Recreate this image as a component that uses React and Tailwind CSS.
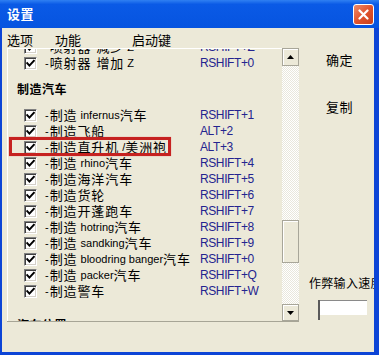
import React from "react";

const CJK = { fontFamily: '"Noto Sans CJK SC", "Liberation Sans", sans-serif' };
const LAT = { fontFamily: '"Liberation Sans", "Noto Sans CJK SC", sans-serif' };

function Mixed({ text }) {
  const parts = text.split(/([\x00-\x7F]+)/).filter((p) => p.length);
  return parts.map((p, i) => {
    if (p === " ") return <span key={i} className="inline-block w-[5px]" />;
    if (/^[\x00-\x7F]+$/.test(p)) {
      return (
        <span key={i} className="whitespace-pre text-[11px] tracking-normal" style={LAT}>
          {p}
        </span>
      );
    }
    return (
      <span key={i} className="text-[13px] tracking-[0.9px]" style={CJK}>
        {p}
      </span>
    );
  });
}

function Checkbox() {
  return (
    <div className="flex h-[13px] w-[13px] shrink-0 items-center justify-center border border-t-[#808080] border-l-[#808080] border-b-white border-r-white bg-white shadow-[inset_1px_1px_0_#404040,inset_-1px_-1px_0_#d4d0c8]">
      <svg width="9" height="9" viewBox="0 0 9 9">
        <path d="M1.2 4.2 L3.4 6.6 L7.8 1.8" fill="none" stroke="#000" strokeWidth="2" strokeLinecap="square" />
      </svg>
    </div>
  );
}

function Row({ label, key2, mark }) {
  return (
    <div className="relative flex h-[16px] items-center pl-[16px]">
      <Checkbox />
      <div className="ml-[8px] flex w-[155px] items-center whitespace-nowrap leading-[16px] text-black">
        <span className="mr-[1px] text-[11px]" style={LAT}>-</span>
        <Mixed text={label} />
      </div>
      <div className="whitespace-nowrap text-[12px] leading-[16px] tracking-[-0.4px] text-[#24248f]" style={LAT}>
        {key2}
      </div>
      {mark && (
        <div className="absolute left-[1px] top-[-2px] h-[19px] w-[162px] border-[3px] border-[#c62220] shadow-[0_0_1px_#e88]" />
      )}
    </div>
  );
}

const cars = [
  ["制造 infernus汽车", "RSHIFT+1"],
  ["制造飞船", "ALT+2"],
  ["制造直升机 /美洲袍", "ALT+3", true],
  ["制造 rhino汽车", "RSHIFT+4"],
  ["制造海洋汽车", "RSHIFT+5"],
  ["制造货轮", "RSHIFT+6"],
  ["制造开蓬跑车", "RSHIFT+7"],
  ["制造 hotring汽车", "RSHIFT+8"],
  ["制造 sandking汽车", "RSHIFT+9"],
  ["制造 bloodring banger汽车", "RSHIFT+0"],
  ["制造 packer汽车", "RSHIFT+Q"],
  ["制造警车", "RSHIFT+W"],
];

function Arrow({ up }) {
  return (
    <svg width="7" height="4" viewBox="0 0 7 4">
      <path d={up ? "M0 4 L3.5 0 L7 4 Z" : "M0 0 L7 0 L3.5 4 Z"} fill="#000" />
    </svg>
  );
}

export default function App() {
  return (
    <div className="flex h-[355px] w-[379px] flex-col overflow-hidden bg-[#ece9d8]" style={CJK}>
      {/* title bar */}
      <div className="flex h-[28px] shrink-0 items-center bg-linear-to-b from-[#2f80f2] via-[#0a5ae6] via-15% to-[#0654e0] pl-[7px] pr-[5px]">
        <span className="text-[13px] font-bold leading-[16px] tracking-[0.5px] text-white" style={CJK}>设置</span>
        <div className="ml-auto flex h-[21px] w-[21px] items-center justify-center rounded-[3px] border border-white bg-linear-to-br from-[#ec8a6a] via-[#e0532d] to-[#c8401c]">
          <svg width="11" height="11" viewBox="0 0 11 11">
            <path d="M1.5 1.5 L9.5 9.5 M9.5 1.5 L1.5 9.5" stroke="#fff" strokeWidth="2.2" strokeLinecap="round" />
          </svg>
        </div>
      </div>

      {/* body */}
      <div className="flex flex-1 border-b-[3px] border-l-[2px] border-r-[5px] border-[#0c44d6]">
        {/* left column */}
        <div className="flex w-[298px] flex-col">
          <div className="flex h-[20px] items-start pl-[5px] pt-[4px] text-[13px] leading-[16px] text-black">
            <span className="w-[48px]">选项</span>
            <span className="w-[77px]">功能</span>
            <span>启动键</span>
          </div>
          <div className="ml-[5px] w-[292px] border-b border-[#a7a596]">
            <div className="flex h-[273px]">
              <div className="h-full w-[275px] overflow-hidden border-l border-t border-white">
                <div className="mt-[-10px]">
                  <Row label="喷射器 减少 Z" key2="RSHIFT+Z" />
                  <Row label="喷射器 增加 Z" key2="RSHIFT+0" />
                  <div className="flex h-[36px] items-center pl-[9px] text-[12px] font-bold leading-[14px] tracking-[0.5px] text-black">
                    制造汽车
                  </div>
                  {cars.map(([a, b, m], i) => (
                    <Row key={i} label={a} key2={b} mark={m} />
                  ))}
                  <div className="pl-[9px] pt-[19px] text-[12px] font-bold leading-[14px] tracking-[0.5px] text-black">
                    汽车位置
                  </div>
                </div>
              </div>
              {/* scrollbar */}
              <div className="flex w-[17px] flex-col">
                <div className="flex h-[18px] items-center justify-center border border-[#a8a699] bg-[#ece9d8] shadow-[inset_1px_1px_0_#fff]">
                  <Arrow up />
                </div>
                <div className="flex flex-1 flex-col bg-[image:repeating-conic-gradient(#ffffff_0_25%,#e9e7dc_0_50%)] bg-size-[2px_2px]">
                  <div className="h-[154px]" />
                  <div className="h-[43px] border border-[#a8a699] bg-[#ece9d8] shadow-[inset_1px_1px_0_#fff]" />
                </div>
                <div className="flex h-[17px] items-center justify-center border border-[#a8a699] bg-[#ece9d8] shadow-[inset_1px_1px_0_#fff]">
                  <Arrow />
                </div>
              </div>
            </div>
          </div>
        </div>

        {/* right column */}
        <div className="flex flex-1 flex-col overflow-hidden">
          <div className="mt-[24px] pl-[26px] text-[13px] leading-[16px] tracking-[0.5px] text-black">确定</div>
          <div className="mt-[31px] pl-[26px] text-[13px] leading-[16px] tracking-[0.5px] text-black">复制</div>
          <div className="mt-[160px] whitespace-nowrap pl-[9px] text-[12px] leading-[16px] tracking-[0.3px] text-black">作弊输入速度</div>
          <div className="ml-[18px] mt-[9px] flex">
            <div className="h-[20px] w-[2px] bg-[#5a5a5a]" />
            <div className="h-[15px] w-[47px] border-t border-[#8a8a8a] bg-white" />
          </div>
        </div>
      </div>
    </div>
  );
}
